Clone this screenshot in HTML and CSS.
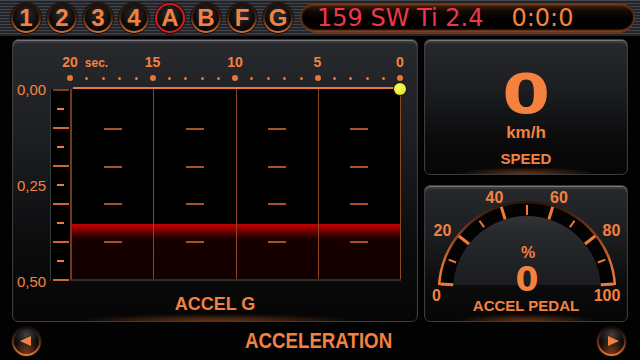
FILE: index.html
```html
<!DOCTYPE html>
<html lang="en">
<head>
    <meta charset="UTF-8">
    <meta name="viewport" content="width=device-width, initial-scale=1.0">
    <title>Acceleration</title>
    <link rel="stylesheet" href="styles.css">
</head>
<body>

    <header class="topbar">
        <nav class="modes">
            <button class="mode">1</button>
            <button class="mode">2</button>
            <button class="mode">3</button>
            <button class="mode">4</button>
            <button class="mode active">A</button>
            <button class="mode">B</button>
            <button class="mode">F</button>
            <button class="mode">G</button>
        </nav>
        <div class="display">
            <span class="car">159 SW Ti 2.4</span>
            <span class="clock">0:0:0</span>
        </div>
    </header>

    <main class="content">
        <!-- Accel G chart -->
        <section class="panel accel">
            <div class="scale-labels">
                <span>20<small class="unit">sec.</small></span>
                <span>15</span>
                <span>10</span>
                <span>5</span>
                <span>0</span>
            </div>
            <div class="scale-dots">
                <i class="big"></i><i></i><i></i><i></i><i></i>
                <i class="big"></i><i></i><i></i><i></i><i></i>
                <i class="big"></i><i></i><i></i><i></i><i></i>
                <i class="big"></i><i></i><i></i><i></i><i></i>
                <i class="big"></i>
            </div>
            <div class="chart">
                <div class="now-line"></div>
                <div class="y-labels">
                    <span>0,00</span>
                    <span>0,25</span>
                    <span>0,50</span>
                </div>
                <div class="ruler">
                    <i class="long top"></i><i></i><i class="long"></i><i></i><i class="long"></i><i></i>
                    <i class="long"></i><i></i><i class="long"></i><i></i><i class="long"></i>
                </div>
                <div class="plot">
                    <div class="col"><i></i><i></i><i></i><i></i></div>
                    <div class="col"><i></i><i></i><i></i><i></i></div>
                    <div class="col"><i></i><i></i><i></i><i></i></div>
                    <div class="col"><i></i><i></i><i></i><i></i></div>
                </div>
            </div>
            <h2 class="panel-title">ACCEL G</h2>
        </section>

        <div class="side">
            <section class="panel speed">
                <span class="speed-value">0</span>
                <span class="speed-unit">km/h</span>
                <h2 class="speed-label">SPEED</h2>
            </section>

            <section class="panel pedal">
                <svg class="gauge" width="202" height="110" viewBox="425 186 202 110">
                    <defs>
                        <linearGradient id="rim" gradientUnits="userSpaceOnUse" x1="0" y1="201" x2="0" y2="285">
                            <stop offset="0" stop-color="#2a1408"/>
                            <stop offset="0.35" stop-color="#7a3818"/>
                            <stop offset="0.7" stop-color="#d86a2c"/>
                            <stop offset="1" stop-color="#f07a36"/>
                        </linearGradient>
                        <linearGradient id="dome" gradientUnits="userSpaceOnUse" x1="0" y1="216" x2="0" y2="285">
                            <stop offset="0" stop-color="#323438"/>
                            <stop offset="0.25" stop-color="#27292c"/>
                            <stop offset="1" stop-color="#1b1c1f"/>
                        </linearGradient>
                        <clipPath id="cut">
                            <rect x="425" y="186" width="202" height="99"/>
                        </clipPath>
                    </defs>
                    <g clip-path="url(#cut)">
                        <circle cx="527" cy="290" r="88" fill="#030303" stroke="url(#rim)" stroke-width="2.5"/>
                        <circle cx="527" cy="290" r="74" fill="url(#dome)"/>
                    </g>
                    <g class="ticks">
                        <line class="major" x1="453.2" y1="284.8" x2="440.2" y2="283.9"/>
                        <line x1="456.1" y1="262.5" x2="448.7" y2="259.6"/>
                        <line class="major" x1="469.0" y1="244.0" x2="458.8" y2="236.0"/>
                        <line x1="484.1" y1="227.3" x2="479.5" y2="220.7"/>
                        <line class="major" x1="505.1" y1="219.3" x2="501.3" y2="206.9"/>
                        <line x1="527" y1="215" x2="527" y2="205"/>
                        <line class="major" x1="548.9" y1="219.3" x2="552.7" y2="206.9"/>
                        <line x1="569.9" y1="227.3" x2="574.5" y2="220.7"/>
                        <line class="major" x1="585.0" y1="244.0" x2="595.2" y2="236.0"/>
                        <line x1="597.9" y1="262.5" x2="605.3" y2="259.6"/>
                        <line class="major" x1="600.8" y1="284.8" x2="613.8" y2="283.9"/>
                    </g>
                    <g class="gauge-labels">
                        <text x="436.5" y="300.7">0</text>
                        <text x="442.5" y="235.7">20</text>
                        <text x="494.5" y="202.7">40</text>
                        <text x="559" y="202.7">60</text>
                        <text x="611.5" y="235.7">80</text>
                        <text x="607" y="300.7">100</text>
                    </g>
                    <text class="gauge-unit" x="528" y="258">%</text>
                    <text class="gauge-value" x="527" y="291">0</text>
                </svg>
                <h2 class="pedal-title">ACCEL PEDAL</h2>
            </section>
        </div>
    </main>

    <footer class="bottombar">
        <button class="nav-btn prev"></button>
        <h1 class="page-title">ACCELERATION</h1>
        <button class="nav-btn next"></button>
    </footer>

</body>
</html>
```

FILE: styles.css
```css
* {
    box-sizing: border-box;
    margin: 0;
    padding: 0;
}

body {
    width: 640px;
    height: 360px;
    overflow: hidden;
    background: #020202;
    font-family: "Liberation Sans", Arial, sans-serif;
    color: #f5813f;
}

/* Top bar */
.topbar {
    height: 36px;
    display: flex;
    align-items: center;
    padding-left: 11px;
    background: repeating-linear-gradient(to bottom, #42454c 0, #42454c 1px, #26282d 1px, #1f2125 3px);
}

.modes {
    display: flex;
    gap: 6px;
}

.mode {
    width: 30px;
    height: 30px;
    border-radius: 50%;
    border: 2px solid transparent;
    background:
        radial-gradient(circle at 50% 35%, #2c2c2f 0, #0e0e0f 55%, #000 100%) padding-box,
        linear-gradient(#241006, #4a220c 50%, #e0702f) border-box;
    box-shadow: 0 0 0 1px #121212;
    display: flex;
    align-items: center;
    justify-content: center;
    font-family: "Liberation Sans", Arial, sans-serif;
    font-weight: bold;
    font-size: 24px;
    line-height: 1;
    color: #f5813f;
}

.mode.active {
    background:
        radial-gradient(circle at 50% 35%, #2c2c2f 0, #0e0e0f 55%, #000 100%) padding-box,
        linear-gradient(#d41616, #e01a1a) border-box;
}

.display {
    margin-left: 7px;
    width: 335px;
    height: 30px;
    border-radius: 15px;
    border: 1px solid #6a3516;
    background: linear-gradient(#4a240e, #120905 25%, #000 55%, #050302);
    box-shadow: inset 0 -2px 2px rgba(240, 122, 54, 0.55), inset 0 1px 2px rgba(240, 122, 54, 0.4);
    display: flex;
    align-items: center;
    padding-left: 16px;
    font-family: "DejaVu Sans", sans-serif;
    font-size: 24px;
    line-height: 1;
}

.car {
    color: #f0364a;
}

.clock {
    margin-left: 28px;
    color: #f5813f;
}

/* Panels */
.content {
    display: flex;
    gap: 6px;
    padding: 3px 12px 0;
}

.panel {
    border: 1px solid #3a3c40;
    border-radius: 6px;
    background:
        radial-gradient(35% 7px at 50% 100%, rgba(224, 110, 40, 0.45), transparent),
        linear-gradient(#27292d, #1c1e21 35%, #0b0b0c 75%, #060606);
    box-shadow: inset 0 1px 0 #75777b, inset 0 3px 2px rgba(255, 255, 255, 0.1), 0 0 0 1px #000;
}

.accel {
    width: 406px;
    height: 283px;
    padding-top: 14px;
}

.scale-labels {
    margin-left: 57px;
    width: 330px;
    height: 16px;
    display: flex;
    justify-content: space-between;
    font-weight: bold;
    font-size: 14px;
    line-height: 16px;
}

.scale-labels span {
    width: 0;
    display: flex;
    justify-content: center;
    align-items: baseline;
    white-space: nowrap;
}

.unit {
    width: 0;
    text-indent: 7px;
    font-size: 12px;
}

.scale-dots {
    margin: 5px 0 0 57px;
    width: 330px;
    height: 6px;
    display: flex;
    justify-content: space-between;
    align-items: center;
}

.scale-dots i {
    width: 0;
    display: flex;
    justify-content: center;
}

.scale-dots i::before {
    content: "";
    flex: none;
    width: 3px;
    height: 3px;
    border-radius: 50%;
    background: #e8763a;
}

.scale-dots i.big::before {
    width: 6px;
    height: 6px;
}

.chart {
    margin-top: 5px;
    display: grid;
    grid-template-columns: 37px 20px 331px;
    grid-template-rows: 3px 192px;
}

.now-line {
    grid-column: 3;
    grid-row: 1;
    margin: 1px 3px 0;
    height: 2px;
    background: #e8783a;
    position: relative;
}

.now-line::after {
    content: "";
    position: absolute;
    right: -8px;
    top: -4px;
    width: 12px;
    height: 12px;
    border-radius: 50%;
    background: radial-gradient(circle at 40% 35%, #f6fc5a, #dce214);
    box-shadow: 0 0 0 1px #1a1a1a;
}

.y-labels {
    grid-column: 1;
    grid-row: 2;
    display: flex;
    flex-direction: column;
    justify-content: space-between;
    align-items: center;
    font-size: 15px;
    color: #f28444;
}

.y-labels span {
    height: 0;
    display: flex;
    align-items: center;
}

.ruler {
    grid-column: 2;
    grid-row: 2;
    border-left: 1px solid #35373b;
    background: #000;
    display: flex;
    flex-direction: column;
    justify-content: space-between;
    align-items: center;
}

.ruler i {
    width: 7px;
    height: 2px;
    background: #f07a3a;
}

.ruler i.long {
    width: 16px;
    background: #d2672e;
}

.ruler i.top {
    background: #7a4020;
}

.plot {
    grid-column: 3;
    grid-row: 2;
    display: flex;
    border-left: 2px solid #74391a;
    border-bottom: 2px solid #2a2c30;
    background: #000;
}

.col {
    flex: 1;
    border-right: 1px solid #8e4620;
    padding-top: 3px;
    display: flex;
    flex-direction: column;
    justify-content: space-evenly;
    align-items: center;
    background: linear-gradient(to top, #120000 0, #170000 40px, #5a0000 46px, #b00000 53px, #c40000 55px, transparent 55px);
}

.col i {
    width: 18px;
    height: 2px;
    background: #a85228;
}

.panel-title {
    margin-top: 13px;
    text-align: center;
    font-size: 18px;
    line-height: 20px;
}

/* Right column */
.side {
    width: 204px;
    display: flex;
    flex-direction: column;
    gap: 10px;
}

.speed {
    height: 136px;
    display: flex;
    flex-direction: column;
    align-items: center;
    padding-top: 30px;
}

.speed-value {
    display: inline-block;
    font-family: "DejaVu Sans", sans-serif;
    font-weight: bold;
    font-size: 55px;
    line-height: 48px;
    transform: scaleX(1.25);
}

.speed-unit {
    margin-top: 6px;
    font-weight: bold;
    font-size: 17px;
    line-height: 18px;
}

.speed-label {
    margin-top: 8px;
    font-size: 15px;
    line-height: 18px;
}

.pedal {
    height: 137px;
}

.gauge {
    display: block;
    overflow: visible;
}

.ticks line {
    stroke: #f07a36;
    stroke-width: 2;
}

.ticks line.major {
    stroke-width: 3;
}

.gauge-labels text {
    fill: #f5813f;
    font-family: "Liberation Sans", Arial, sans-serif;
    font-weight: bold;
    font-size: 16px;
    text-anchor: middle;
}

.gauge-unit {
    fill: #f5813f;
    font-family: "Liberation Sans", Arial, sans-serif;
    font-weight: bold;
    font-size: 16px;
    text-anchor: middle;
}

.gauge-value {
    fill: #f5813f;
    font-family: "DejaVu Sans", sans-serif;
    font-weight: bold;
    font-size: 33px;
    text-anchor: middle;
}

.pedal-title {
    margin-top: 1px;
    text-align: center;
    font-size: 15px;
    line-height: 17px;
}

/* Bottom bar */
.bottombar {
    height: 38px;
    display: grid;
    grid-template-columns: 1fr auto 1fr;
    align-items: center;
    padding: 0 14px 0 12px;
}

.nav-btn {
    width: 29px;
    height: 29px;
    border-radius: 50%;
    border: 2px solid transparent;
    background:
        radial-gradient(circle at 50% 105%, rgba(240, 120, 50, 0.55) 0, transparent 55%) padding-box,
        radial-gradient(circle at 50% 25%, #414144 0, #131314 45%, #000 75%) padding-box,
        linear-gradient(#1a0c04, #5a2a10 50%, #f07a36) border-box;
    box-shadow: 0 0 0 1px #111;
    display: flex;
    align-items: center;
    justify-content: center;
}

.nav-btn::before {
    content: "";
    border-style: solid;
}

.prev::before {
    border-width: 5px 11px 5px 0;
    border-color: transparent #f5813f transparent transparent;
    margin-right: 3px;
}

.next {
    justify-self: end;
}

.next::before {
    border-width: 5px 0 5px 11px;
    border-color: transparent transparent transparent #f5813f;
    margin-left: 3px;
}

.page-title {
    display: inline-block;
    font-size: 22px;
    line-height: 24px;
    transform: scaleX(0.85);
}
```
